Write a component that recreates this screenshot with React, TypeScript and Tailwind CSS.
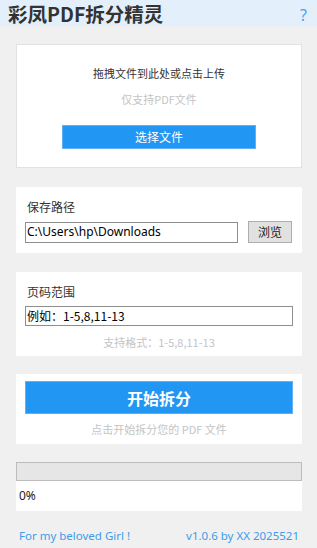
import React from "react";

const cjk = { fontFamily: '"Noto Sans CJK SC", "Noto Sans", sans-serif' };
const latin = { fontFamily: '"Noto Sans", "Noto Sans CJK SC", sans-serif' };

export default function App() {
  return (
    <div className="w-[317px] h-[548px] bg-[#f0f0f0] overflow-hidden flex flex-col" style={cjk}>
      <div className="h-[26px] bg-[#e3f0fb] flex items-start justify-between pl-[8px] pr-[10px] shrink-0">
        <div className="text-[19.5px] font-bold text-[#333] leading-[28px]">彩凤PDF拆分精灵</div>
        <div className="self-center text-[16px] text-[#4aa3ee] leading-none mt-[4px]" style={latin}>?</div>
      </div>

      <div className="mt-[18px] ml-[16px] w-[286px] h-[124px] bg-white border border-[#e2e2e2] flex flex-col items-center shrink-0">
        <div className="mt-[20px] text-[11px] leading-[16px] text-[#333]">拖拽文件到此处或点击上传</div>
        <div className="mt-[10px] text-[11px] leading-[16px] text-[#c4c4c4]">仅支持PDF文件</div>
        <div className="mt-[18px] w-[194px] h-[24px] bg-[#2196f3] border border-[#5fb0f5] flex items-center justify-center text-white text-[12px]">选择文件</div>
      </div>

      <div className="mt-[19px] ml-[16px] w-[286px] h-[66px] bg-white flex flex-col shrink-0 px-[9px]">
        <div className="mt-[12px] text-[12px] leading-[16px] text-[#333] pl-[2px]">保存路径</div>
        <div className="mt-[6px] flex items-center">
          <div className="w-[213px] h-[21px] border border-[#8e8e8e] flex items-center pl-[1px] text-[12px] text-black" style={latin}>C:\Users\hp\Downloads</div>
          <div className="ml-[10px] w-[44px] h-[22px] bg-[#e1e1e1] border border-[#adadad] flex items-center justify-center text-[12px] text-[#222]">浏览</div>
        </div>
      </div>

      <div className="mt-[19px] ml-[16px] w-[286px] h-[84px] bg-white flex flex-col shrink-0 px-[9px]">
        <div className="mt-[12px] text-[12px] leading-[16px] text-[#333] pl-[2px]">页码范围</div>
        <div className="mt-[6px] w-[268px] h-[20px] border border-[#8e8e8e] flex items-center pl-[1px] text-[12px] text-black">例如：1-5,8,11-13</div>
        <div className="mt-[8px] text-[11px] leading-[16px] text-[#c4c4c4] text-center">支持格式：1-5,8,11-13</div>
      </div>

      <div className="mt-[18px] ml-[16px] w-[286px] h-[70px] bg-white flex flex-col shrink-0 px-[9px]">
        <div className="mt-[7px] w-[268px] h-[33px] bg-[#2196f3] border border-[#5fb0f5] flex items-center justify-center text-white text-[16px] font-bold">开始拆分</div>
        <div className="mt-[7px] text-[11px] leading-[16px] text-[#c4c4c4] text-center">点击开始拆分您的 PDF 文件</div>
      </div>

      <div className="mt-[18px] ml-[16px] w-[286px] shrink-0">
        <div className="h-[19px] bg-[#e6e6e6] border border-[#bcbcbc]"></div>
        <div className="h-[30px] bg-white flex items-center pl-[3px] text-[12px] text-[#222]" style={latin}>0%</div>
      </div>

      <div className="mt-[17px] mx-[19px] flex justify-between text-[11.5px] leading-[16px] text-[#3d9be9]" style={latin}>
        <span>For my beloved Girl !</span>
        <span className="mr-[-1px]">v1.0.6 by XX 2025521</span>
      </div>
    </div>
  );
}
